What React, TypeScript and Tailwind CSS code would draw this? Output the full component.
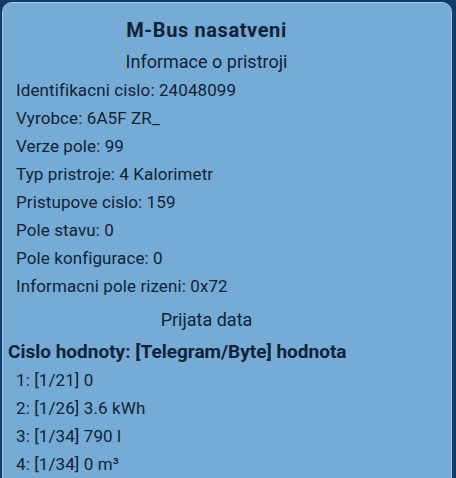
import React from "react";

const info = [
  "Identifikacni cislo: 24048099",
  "Vyrobce: 6A5F ZR_",
  "Verze pole: 99",
  "Typ pristroje: 4 Kalorimetr",
  "Pristupove cislo: 159",
  "Pole stavu: 0",
  "Pole konfigurace: 0",
  "Informacni pole rizeni: 0x72",
];

const data = ["1: [1/21] 0", "2: [1/26] 3.6 kWh", "3: [1/34] 790 l", "4: [1/34] 0 m³"];

export default function App() {
  return (
    <div className="w-[456px] h-[478px] overflow-hidden bg-[#0f3c68] pt-[2px] pl-[2px] pr-[4px]" style={{ fontFamily: "Roboto, 'Liberation Sans', sans-serif" }}>
      <div className="h-[520px] rounded-[10px] border border-[#a3c7e6] bg-[#76abd6] text-[#0f2236]">
        <div className="w-[407px] pt-[10px] text-center text-[20px] font-bold tracking-[0.6px] leading-[34px]">M-Bus nasatveni</div>
        <div className="w-[407px] mt-[1px] text-center text-[18px] leading-[28px]">Informace o pristroji</div>
        <div className="pl-[13px] text-[17px] tracking-[0.1px] leading-[28px]">
          {info.map((t) => (
            <div key={t}>{t}</div>
          ))}
        </div>
        <div className="w-[407px] mt-[6px] text-center text-[18px] leading-[28px]">Prijata data</div>
        <div className="mt-[4px] pl-[5px] text-[19px] font-bold leading-[28px]">Cislo hodnoty: [Telegram/Byte] hodnota</div>
        <div className="pl-[13px] text-[17px] tracking-[0.1px] leading-[28px]">
          {data.map((t) => (
            <div key={t}>{t}</div>
          ))}
        </div>
      </div>
    </div>
  );
}
